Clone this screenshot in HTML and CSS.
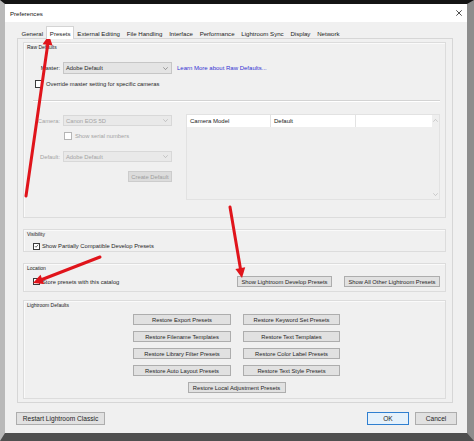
FILE: index.html
```html
<!DOCTYPE html>
<html>
<head>
<meta charset="utf-8">
<link rel="stylesheet" href="styles.css">
</head>
<body>
<div class="desk">
  <div class="window">
    <div class="titlebar">
      <span class="title">Preferences</span>
      <svg class="close" width="6" height="6" viewBox="0 0 6 6"><path d="M0.3 0.3L5.7 5.7M5.7 0.3L0.3 5.7" stroke="#222" stroke-width="0.8" fill="none"/></svg>
    </div>
    <div class="client">
      <div class="tabs">
        <div class="tab">General</div>
        <div class="tab active">Presets</div>
        <div class="tab">External Editing</div>
        <div class="tab">File Handling</div>
        <div class="tab">Interface</div>
        <div class="tab">Performance</div>
        <div class="tab">Lightroom Sync</div>
        <div class="tab">Display</div>
        <div class="tab">Network</div>
      </div>
      <div class="panel">
        <div class="group raw">
          <div class="glabel">Raw Defaults</div>
          <div class="raw-body">
            <div class="row master">
              <span class="flabel">Master:</span>
              <div class="select"><span>Adobe Default</span><svg width="5" height="3" viewBox="0 0 5 3"><path d="M0.3 0.3L2.5 2.6L4.7 0.3" stroke="#666" stroke-width="0.6" fill="none"/></svg></div>
              <span class="link">Learn More about Raw Defaults...</span>
            </div>
            <div class="row override">
              <span class="check"></span>
              <span class="ctext">Override master setting for specific cameras</span>
            </div>
            <div class="sep"></div>
            <div class="lower">
              <div class="lcol">
                <div class="row camera">
                  <span class="flabel dis">Camera:</span>
                  <div class="select disabled"><span>Canon EOS 5D</span><svg width="5" height="3" viewBox="0 0 5 3"><path d="M0.3 0.3L2.5 2.6L4.7 0.3" stroke="#aaa" stroke-width="0.6" fill="none"/></svg></div>
                </div>
                <div class="row serial">
                  <span class="check dimcheck"></span>
                  <span class="ctext dis">Show serial numbers</span>
                </div>
                <div class="row default">
                  <span class="flabel dis">Default:</span>
                  <div class="select disabled"><span>Adobe Default</span><svg width="5" height="3" viewBox="0 0 5 3"><path d="M0.3 0.3L2.5 2.6L4.7 0.3" stroke="#aaa" stroke-width="0.6" fill="none"/></svg></div>
                </div>
                <div class="btn create">Create Default</div>
              </div>
              <div class="table">
                <div class="tmain">
                  <div class="thead">
                    <div class="th c1">Camera Model</div>
                    <div class="th c2">Default</div>
                    <div class="th c3"></div>
                  </div>
                </div>
                <div class="vscroll">
                  <svg width="5" height="3" viewBox="0 0 5 3"><path d="M0.3 2.7L2.5 0.4L4.7 2.7" stroke="#b0b0b0" stroke-width="0.6" fill="none"/></svg>
                  <svg width="5" height="3" viewBox="0 0 5 3"><path d="M0.3 0.3L2.5 2.6L4.7 0.3" stroke="#b0b0b0" stroke-width="0.6" fill="none"/></svg>
                </div>
              </div>
            </div>
          </div>
        </div>

        <div class="group vis">
          <div class="glabel">Visibility</div>
          <div class="row cbrow">
            <span class="check checked"><svg width="6" height="6" viewBox="0 0 6 6"><path d="M1 3.1L2.4 4.5L5 1.4" stroke="#222" stroke-width="0.8" fill="none"/></svg></span>
            <span class="ctext">Show Partially Compatible Develop Presets</span>
          </div>
        </div>

        <div class="group loc">
          <div class="glabel">Location</div>
          <div class="locrow">
            <div class="locleft">
              <span class="check"></span>
              <span class="ctext">Store presets with this catalog</span>
            </div>
            <div class="btn">Show Lightroom Develop Presets</div>
            <div class="btn">Show All Other Lightroom Presets</div>
          </div>
        </div>

        <div class="group defaults">
          <div class="glabel">Lightroom Defaults</div>
          <div class="dgrid">
            <div class="btn">Restore Export Presets</div>
            <div class="btn">Restore Keyword Set Presets</div>
            <div class="btn">Restore Filename Templates</div>
            <div class="btn">Restore Text Templates</div>
            <div class="btn">Restore Library Filter Presets</div>
            <div class="btn">Restore Color Label Presets</div>
            <div class="btn">Restore Auto Layout Presets</div>
            <div class="btn">Restore Text Style Presets</div>
            <div class="btn span2">Restore Local Adjustment Presets</div>
          </div>
        </div>
      </div>
      <div class="footer">
        <div class="btn fbtn restart">Restart Lightroom Classic</div>
        <div class="fright">
          <div class="btn fbtn ok">OK</div>
          <div class="btn fbtn">Cancel</div>
        </div>
      </div>
    </div>
  </div>
</div>
<svg class="annot" width="474" height="441" viewBox="0 0 474 441">
  <g stroke="#e0141b" stroke-width="3" stroke-linecap="round" fill="none">
    <line x1="26" y1="196" x2="47.8" y2="44"/>
    <line x1="230" y1="207" x2="240.5" y2="269"/>
    <line x1="100" y1="257" x2="42" y2="279.5"/>
  </g>
  <g fill="#e0141b">
    <polygon points="49,35 52.5,45.6 42.6,44.2"/>
    <polygon points="242,278 245.2,267.3 235.4,268.9"/>
    <polygon points="33,283 44.1,284.1 40.5,274.7"/>
  </g>
</svg>
</body>
</html>
```

FILE: styles.css
```css
body {
  margin: 0;
  width: 474px;
  height: 441px;
  overflow: hidden;
  position: relative;
  font-family: "Liberation Sans", Arial, sans-serif;
  font-size: 5.8px;
  color: #1f1f1f;
  background: #4f4f4f;
}

.desk {
  box-sizing: border-box;
  width: 474px;
  height: 441px;
  border-style: solid;
  border-width: 4px 7px 8px 5px;
  border-color: #141414 #8d8d8d #4f4f4f #b9b9b9;
  background: #f0f0f0;
}

.window {
  height: 100%;
  display: flex;
  flex-direction: column;
  background: #f0f0f0;
}

.titlebar {
  height: 18px;
  flex: none;
  background: #ffffff;
  display: flex;
  align-items: center;
  justify-content: space-between;
  padding: 0 5px;
  font-size: 6.1px;
  color: #111;
}

.client {
  flex: 1;
  padding: 5px 14px 0 12px;
  display: flex;
  flex-direction: column;
  min-width: 0;
}

.tabs {
  display: flex;
  height: 11px;
  flex: none;
  padding-left: 1px;
}

.tab {
  padding: 0 2.4px;
  display: flex;
  align-items: center;
  font-size: 6.1px;
  color: #222;
  border: 1px solid transparent;
  border-bottom: 0;
}

.tab.active {
  background: #ffffff;
  border-color: #d4d4d4;
  margin-top: -1px;
  margin-bottom: -1px;
  position: relative;
  z-index: 1;
}

.panel {
  height: 365px;
  flex: none;
  box-sizing: border-box;
  border: 1px solid #d6d6d6;
  padding: 3px 6px 0 5px;
  display: flex;
  flex-direction: column;
  background: #f0f0f0;
}

.group {
  box-sizing: border-box;
  border: 1px solid #dcdcdc;
  box-shadow: inset 1px 1px 0 #fafafa;
  display: flex;
  flex-direction: column;
  flex: none;
  min-width: 0;
}

.glabel {
  font-size: 5px;
  line-height: 6px;
  padding: 1px 0 0 3px;
  color: #222;
}

.raw { height: 176px; }
.vis { height: 23px; margin-top: 11px; }
.loc { height: 29px; margin-top: 11px; }
.defaults { height: 99px; margin-top: 8px; }

.raw-body {
  padding: 0 5px 0 9px;
  display: flex;
  flex-direction: column;
}

.row {
  display: flex;
  align-items: center;
}

.master {
  margin-top: 12px;
  height: 12px;
}

.flabel {
  width: 27px;
  text-align: right;
  margin-right: 3px;
}

.dis { color: #a3a3a3; }

.select {
  box-sizing: border-box;
  width: 109px;
  height: 12px;
  border: 1px solid #c6c6c6;
  background: #e4e4e4;
  display: flex;
  align-items: center;
  justify-content: space-between;
  padding: 0 3px 0 2px;
}

.select.disabled {
  height: 11px;
  background: #e9e9e9;
  border-color: #d8d8d8;
  color: #a3a3a3;
}

.link {
  margin-left: 5px;
  font-size: 6px;
  color: #3232d2;
}

.override {
  margin-top: 6px;
  height: 8px;
}

.check {
  box-sizing: border-box;
  width: 8px;
  height: 8px;
  border: 1px solid #3a3a3a;
  background: #ffffff;
  flex: none;
  display: flex;
  align-items: center;
  justify-content: center;
}

.override .check { margin-left: 2px; }

.ctext { margin-left: 3px; }

.dimcheck { border-color: #b5b5b5; }

.sep {
  margin-top: 12px;
  height: 0;
  border-top: 1px solid #d3d3d3;
  border-bottom: 1px solid #ffffff;
}

.lower {
  margin-top: 12px;
  display: flex;
  height: 86px;
}

.lcol {
  width: 139px;
  display: flex;
  flex-direction: column;
  flex: none;
}

.camera {
  margin-top: 1px;
  height: 11px;
}

.serial {
  margin-top: 6px;
  height: 8px;
}

.serial .check { margin-left: 31px; }

.default {
  margin-top: 11px;
  height: 11px;
}

.btn {
  box-sizing: border-box;
  height: 11px;
  border: 1px solid #adadad;
  background: #e1e1e1;
  display: flex;
  align-items: center;
  justify-content: center;
  font-size: 5.8px;
  color: #1f1f1f;
  white-space: nowrap;
  overflow: hidden;
  flex: none;
}

.create {
  margin-top: 9px;
  width: 44px;
  align-self: flex-end;
  background: #dcdcdc;
  border-color: #cccccc;
  color: #9c9c9c;
}

.table {
  margin-left: 14px;
  flex: 1;
  box-sizing: border-box;
  border: 1px solid #e2e2e2;
  background: #efefef;
  display: flex;
}

.tmain { flex: 1; }

.thead {
  display: flex;
  height: 12px;
  background: #ffffff;
}

.th {
  box-sizing: border-box;
  display: flex;
  align-items: center;
  padding-left: 3px;
  border-right: 1px solid #e3e3e3;
  font-size: 6px;
  color: #222;
}

.c1 { width: 84px; }
.c2 { width: 85px; }
.c3 { flex: 1; border-right: 0; }

.vscroll {
  width: 7px;
  display: flex;
  flex-direction: column;
  justify-content: space-between;
  align-items: center;
  padding: 4px 0 3px;
}

.cbrow {
  margin-top: 5px;
  height: 8px;
}

.cbrow .check, .locleft .check {
  margin-left: 9px;
  width: 7px;
  height: 7px;
}

.locrow {
  margin-top: 5px;
  height: 11px;
  display: grid;
  grid-template-columns: 1fr 95px 96px;
  column-gap: 12px;
  padding-right: 5px;
  align-items: center;
}

.locleft {
  display: flex;
  align-items: center;
}

.locleft .ctext, .cbrow .ctext { margin-left: 2px; }

.dgrid {
  margin-top: 6px;
  display: grid;
  grid-template-columns: 98px 97px;
  column-gap: 12px;
  row-gap: 6px;
  justify-content: center;
  padding-left: 4px;
}

.span2 {
  grid-column: 1 / 3;
  justify-self: center;
  width: 98px;
}

.footer {
  margin-top: 9px;
  margin-left: -1px;
  margin-right: -4px;
  display: flex;
  justify-content: space-between;
}

.fbtn {
  height: 13px;
  font-size: 6.6px;
}

.restart { width: 89px; }

.fright {
  display: flex;
  gap: 6px;
}

.fright .fbtn { width: 42px; }

.ok {
  border-color: #2f7fd0;
  background: #e5f1fb;
}

.annot {
  position: absolute;
  top: 0;
  left: 0;
  pointer-events: none;
}
```
